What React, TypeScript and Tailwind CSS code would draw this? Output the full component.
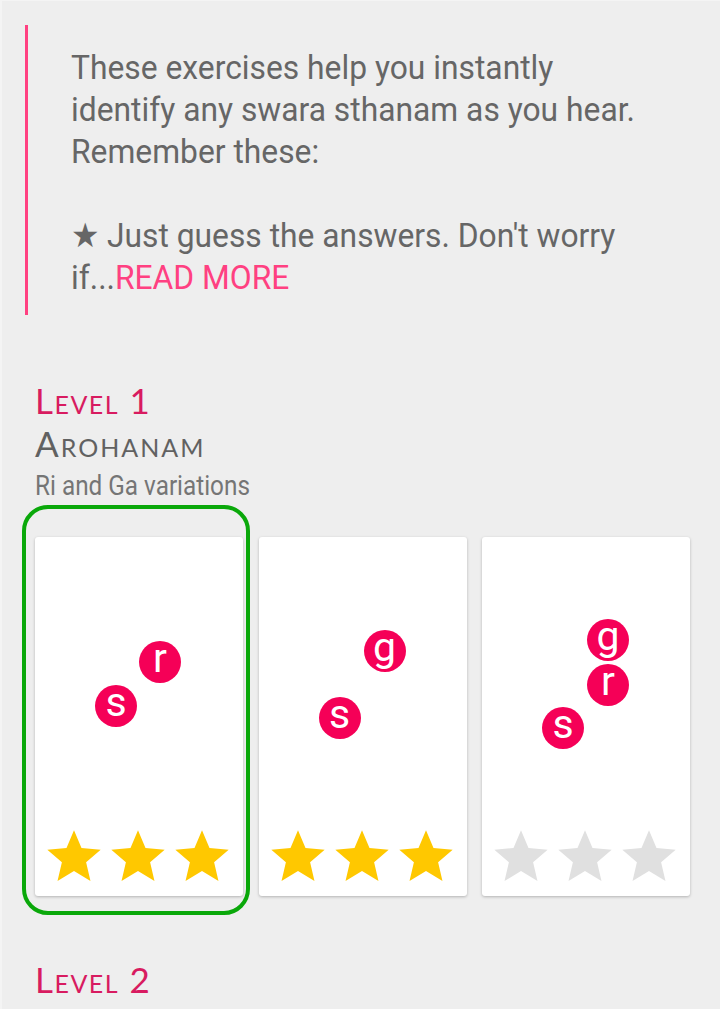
import React from 'react';

const PINK = '#f50057';

type Note = { ch: string; x: number; y: number };

interface Exercise {
  notes: Note[];
  stars: number;
  selected?: boolean;
}

const EXERCISES: Exercise[] = [
  { notes: [{ ch: 's', x: 60, y: 148 }, { ch: 'r', x: 104, y: 104 }], stars: 3, selected: true },
  { notes: [{ ch: 's', x: 60, y: 160 }, { ch: 'g', x: 105, y: 93 }], stars: 3 },
  { notes: [{ ch: 's', x: 60, y: 170 }, { ch: 'r', x: 105, y: 127 }, { ch: 'g', x: 105, y: 82 }], stars: 0 },
];

function Star({ on }: { on: boolean }) {
  return (
    <svg width={64} height={64} viewBox="0 0 24 24" className="block">
      <path
        d="M12 17.27L18.18 21l-1.64-7.03L22 9.24l-7.19-.61L12 2 9.19 8.63 2 9.24l5.46 4.73L5.82 21z"
        fill={on ? '#ffc800' : '#e0e0e0'}
      />
    </svg>
  );
}

function ExerciseCard({ ex }: { ex: Exercise }) {
  return (
    <div className="relative w-[208px] h-[359px] shrink-0">
      {ex.selected && (
        <div className="absolute left-[-13px] top-[-32px] w-[228px] h-[410px] rounded-[26px] border-[4px] border-[#0aa80a]" />
      )}
      <div className="relative w-full h-full bg-white rounded-[3px] shadow-[0_1px_3px_rgba(0,0,0,0.25)] flex flex-col justify-end px-[7px] pb-[7px]">
        {ex.notes.map((n, i) => (
          <div
            key={i}
            className="absolute w-[42px] h-[42px] rounded-full flex items-center justify-center text-white text-[41px] leading-none font-['Roboto',sans-serif] pb-[7px]"
            style={{ left: n.x, top: n.y, backgroundColor: PINK }}
          >
            {n.ch}
          </div>
        ))}
        <div className="flex">
          {[0, 1, 2].map(i => (
            <Star key={i} on={i < ex.stars} />
          ))}
        </div>
      </div>
    </div>
  );
}

export default function App() {
  return (
    <div className="w-[720px] h-[1009px] overflow-hidden bg-[#eeeeee] border-l-2 border-t border-[#f4f4f4] font-['Roboto',sans-serif]">
      {/* Intro quote */}
      <div className="ml-[23px] mt-[24px] h-[290px] border-l-[3px] border-[#ff4081] pl-[43px] pt-[21px] overflow-hidden">
        <div className="origin-left scale-x-[0.935] whitespace-nowrap text-[34px] leading-[42px] text-[#666666]">
          These exercises help you instantly<br />
          identify any swara sthanam as you hear.<br />
          Remember these:<br />
          <br />
          ★ Just guess the answers. Don't worry<br />
          if...<span className="text-[#ff4081]">READ MORE</span>
        </div>
      </div>

      {/* Level 1 */}
      <div className="pl-[33px] pt-[64px]">
        <div className="font-['Lato',sans-serif] [font-variant:small-caps] text-[35px] leading-[42px] text-[#d81b60] tracking-[1.5px]">
          Level 1
        </div>
        <div className="font-['Lato',sans-serif] [font-variant:small-caps] text-[35px] leading-[42px] text-[#616161] tracking-[2px] mt-[1px]">
          Arohanam
        </div>
        <div className="origin-left scale-x-[0.9] whitespace-nowrap text-[27px] leading-[36px] text-[#757575] mt-[4px]">
          Ri and Ga variations
        </div>
      </div>

      <div className="flex gap-[15.5px] pl-[33px] pt-[33px]">
        {EXERCISES.map((ex, i) => (
          <ExerciseCard key={i} ex={ex} />
        ))}
      </div>

      <div className="pl-[33px] pt-[62px]">
        <div className="font-['Lato',sans-serif] [font-variant:small-caps] text-[35px] leading-[42px] text-[#d81b60] tracking-[1.5px]">
          Level 2
        </div>
      </div>
    </div>
  );
}
